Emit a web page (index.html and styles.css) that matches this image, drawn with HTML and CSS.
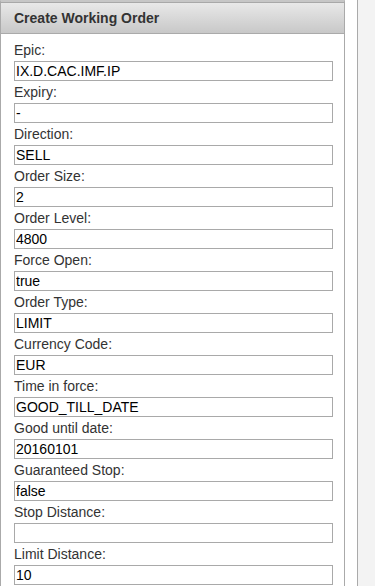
FILE: index.html
```html
<!DOCTYPE html>
<html lang="en">
<head>
  <meta charset="UTF-8" />
  <meta name="viewport" content="width=device-width, initial-scale=1.0" />
  <title>Create Working Order</title>
  <link rel="stylesheet" href="styles.css">
</head>
<body>
  <div class="panel">
    <div class="panel-head">Create Working Order</div>
    <form class="order-form">
      <label>Epic:</label>
      <input type="text" value="IX.D.CAC.IMF.IP" />
      <label>Expiry:</label>
      <input type="text" value="-" />
      <label>Direction:</label>
      <input type="text" value="SELL" />
      <label>Order Size:</label>
      <input type="text" value="2" />
      <label>Order Level:</label>
      <input type="text" value="4800" />
      <label>Force Open:</label>
      <input type="text" value="true" />
      <label>Order Type:</label>
      <input type="text" value="LIMIT" />
      <label>Currency Code:</label>
      <input type="text" value="EUR" />
      <label>Time in force:</label>
      <input type="text" value="GOOD_TILL_DATE" />
      <label>Good until date:</label>
      <input type="text" value="20160101" />
      <label>Guaranteed Stop:</label>
      <input type="text" value="false" />
      <label>Stop Distance:</label>
      <input type="text" value="" />
      <label>Limit Distance:</label>
      <input type="text" value="10" />
      <button type="button" class="btn-create" aria-label="Create"></button>
    </form>
  </div>
  <div class="side"></div>
</body>
</html>
```

FILE: styles.css
```css
body {
  margin: 0;
  padding: 0;
  background-color: #fff;
  font-family: "Liberation Sans", Arial, sans-serif;
  font-size: 14px;
  color: #333;
  display: flex;
  min-height: 100vh;
}

.panel {
  width: 343px;
  border-left: 1px solid #aaa;
  border-right: 1px solid #aaa;
  border-top: 2px solid #c6c6c6;
  flex-shrink: 0;
}

.panel-head {
  height: 30px;
  line-height: 30px;
  padding-left: 13px;
  font-weight: bold;
  color: #333;
  border-top: 1px solid #a8a8a8;
  border-bottom: 1px solid #aaa;
  background: linear-gradient(#e8e8e8, #c8c8c8);
}

.order-form {
  padding: 5px 11px 20px 13px;
}

.order-form label {
  display: block;
  padding-top: 1px;
  line-height: 21px;
  color: #333;
}

.order-form input {
  display: block;
  box-sizing: border-box;
  width: 319px;
  height: 20px;
  margin: 0;
  padding: 0 1px;
  border: 1px solid #a9a9a9;
  font-family: "Liberation Sans", Arial, sans-serif;
  font-size: 14px;
  color: #000;
  background: #fff;
}

.btn-create {
  display: block;
  margin: 1px 0 0 2px;
  width: 40px;
  height: 24px;
  border: 1px solid #d4d4d4;
  background: linear-gradient(#f6f6f6, #dedede);
}

.side {
  flex: 1;
  margin-left: 12px;
  border-left: 1px solid #aaa;
  background-color: #f3f3f3;
}
```
